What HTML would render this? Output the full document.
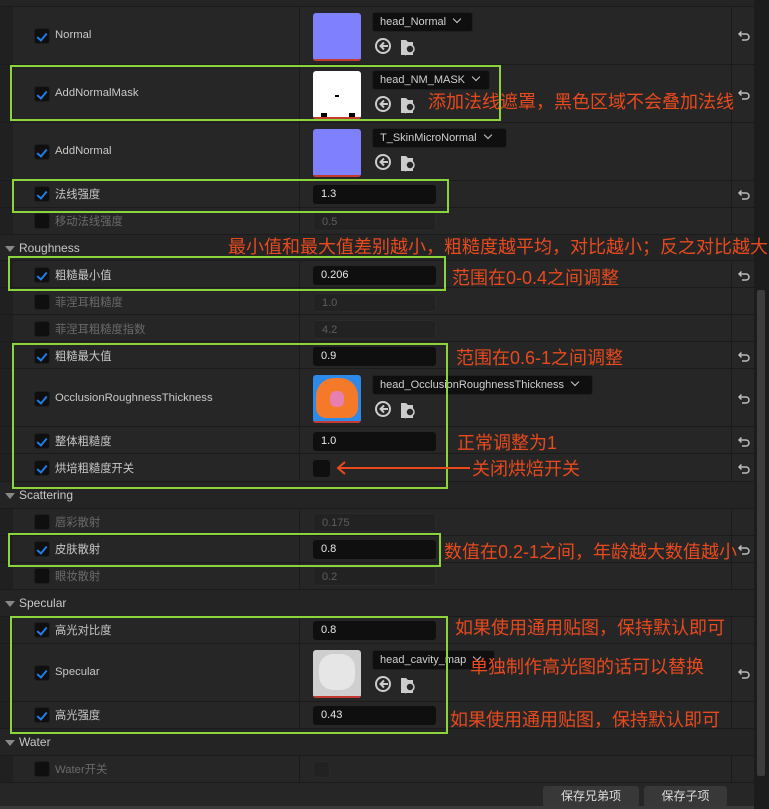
<!DOCTYPE html><html><head><meta charset="utf-8"><style>
*{margin:0;padding:0;box-sizing:border-box}
body{width:769px;height:809px;background:#262626;position:relative;overflow:hidden;font-family:"Liberation Sans","Noto Sans CJK SC",sans-serif;font-size:11px;color:#c8c8c8}
.a{position:absolute}
.row{position:absolute;left:0;width:754px;background:#262626;border-bottom:1px solid #1b1b1b}
.row:before{content:"";position:absolute;left:0;top:0;bottom:0;width:13px;background:#202020}
.div{position:absolute;left:299px;top:0;bottom:0;width:1px;background:#1b1b1b}
.div2{position:absolute;left:731px;top:0;bottom:0;width:1px;background:#1b1b1b}
.cb{position:absolute;left:34px;width:16px;height:16px;background:#0f0f0f;border:1px solid #1e1e1e;border-radius:3px}
.cb.on:after{content:"";position:absolute;left:4px;top:2px;width:4px;height:8px;border:solid #1f7ee8;border-width:0 2px 2px 0;transform:rotate(40deg)}
.lb{position:absolute;left:55px;color:#c8c8c8;font-size:11.3px}
.dis{color:#6a6a6a}
.in{position:absolute;left:313px;width:123px;height:19px;background:#0f0f0f;border-radius:3px;color:#e8e8e8;padding-left:8px;line-height:19px}
.in.d{background:#222;color:#5e5e5e;border:1px solid #2a2a2a}
.hd{position:absolute;left:0;width:754px;background:#242424;border-bottom:1px solid #1b1b1b;color:#c8c8c8;font-size:12px}
.hd:before{content:"";position:absolute;left:5px;top:11px;border:5px solid transparent;border-top:6px solid #888;border-bottom:0}
.th{position:absolute;left:313px;width:48px;height:48px;border-radius:3px;overflow:hidden}
.th:after{content:"";position:absolute;left:0;right:0;bottom:0;height:2px;background:#c43a32}
.dd{position:absolute;left:372px;height:20px;background:#0f0f0f;border-radius:3px;border:1px solid #1f1f1f;color:#d0d0d0;padding-left:7px;line-height:18px}
.dd:after{content:"";display:inline-block;width:5px;height:5px;border:solid #ccc;border-width:0 1.5px 1.5px 0;transform:rotate(45deg);margin-left:8px;position:relative;top:-3px}
.g{position:absolute;border:2px solid #8bd43c}
.r{position:absolute;color:#e84a1e;font-size:18px;white-space:nowrap;font-family:"Liberation Sans","Noto Sans CJK SC",sans-serif}
.btn{position:absolute;top:786px;height:21px;background:#383838;border-radius:3px;color:#ddd;font-size:12px;text-align:center;line-height:21px}
</style></head><body>
<div class="a" style="left:0;top:0;width:769px;height:7px;background:#242424;border-bottom:1px solid #1b1b1b"></div>

<div class="row" style="top:7px;height:58px"><div class="div"></div><div class="div2"></div></div>
<div class="row" style="top:65px;height:58px"><div class="div"></div><div class="div2"></div></div>
<div class="row" style="top:123px;height:58px"><div class="div"></div><div class="div2"></div></div>
<div class="row" style="top:181px;height:27px"><div class="div"></div><div class="div2"></div></div>
<div class="row" style="top:208px;height:27px"><div class="div"></div><div class="div2"></div></div>
<div class="hd" style="top:235px;height:26px"><span class="a" style="left:19px;top:6px">Roughness</span></div>
<div class="row" style="top:261px;height:27px"><div class="div"></div><div class="div2"></div></div>
<div class="row" style="top:288px;height:27px"><div class="div"></div><div class="div2"></div></div>
<div class="row" style="top:315px;height:27px"><div class="div"></div><div class="div2"></div></div>
<div class="row" style="top:342px;height:27px"><div class="div"></div><div class="div2"></div></div>
<div class="row" style="top:369px;height:58px"><div class="div"></div><div class="div2"></div></div>
<div class="row" style="top:427px;height:27px"><div class="div"></div><div class="div2"></div></div>
<div class="row" style="top:454px;height:28px"><div class="div"></div><div class="div2"></div></div>
<div class="hd" style="top:482px;height:27px"><span class="a" style="left:19px;top:6px">Scattering</span></div>
<div class="row" style="top:509px;height:27px"><div class="div"></div><div class="div2"></div></div>
<div class="row" style="top:536px;height:27px"><div class="div"></div><div class="div2"></div></div>
<div class="row" style="top:563px;height:27px"><div class="div"></div><div class="div2"></div></div>
<div class="hd" style="top:590px;height:27px"><span class="a" style="left:19px;top:6px">Specular</span></div>
<div class="row" style="top:617px;height:27px"><div class="div"></div><div class="div2"></div></div>
<div class="row" style="top:644px;height:58px"><div class="div"></div><div class="div2"></div></div>
<div class="row" style="top:702px;height:27px"><div class="div"></div><div class="div2"></div></div>
<div class="hd" style="top:729px;height:27px"><span class="a" style="left:19px;top:6px">Water</span></div>
<div class="row" style="top:756px;height:27px"><div class="div"></div><div class="div2"></div></div>
<div class="a" style="left:0;top:783px;width:754px;height:26px;background:#262626"></div>
<div class="a" style="left:0;top:806px;width:754px;height:3px;background:#3a3a3a"></div>
<div class="a" style="left:754px;top:0;width:15px;height:809px;background:#1c1c1c"></div>
<div class="a" style="left:757px;top:290px;width:8px;height:486px;background:#3d3d3d;border-radius:2px"></div>

<div class="cb on" style="top:28px"></div><div class="lb" style="top:29px">Normal</div>
<div class="cb on" style="top:86px"></div><div class="lb" style="top:87px">AddNormalMask</div>
<div class="cb on" style="top:144px"></div><div class="lb" style="top:145px">AddNormal</div>
<div class="cb on" style="top:186px"></div><div class="lb" style="top:186px">法线强度</div>
<div class="cb" style="top:213px"></div><div class="lb dis" style="top:213px">移动法线强度</div>
<div class="cb on" style="top:267px"></div><div class="lb" style="top:267px">粗糙最小值</div>
<div class="cb" style="top:294px"></div><div class="lb dis" style="top:294px">菲涅耳粗糙度</div>
<div class="cb" style="top:321px"></div><div class="lb dis" style="top:321px">菲涅耳粗糙度指数</div>
<div class="cb on" style="top:348px"></div><div class="lb" style="top:348px">粗糙最大值</div>
<div class="cb on" style="top:391px"></div><div class="lb" style="top:392px">OcclusionRoughnessThickness</div>
<div class="cb on" style="top:433px"></div><div class="lb" style="top:433px">整体粗糙度</div>
<div class="cb on" style="top:460px"></div><div class="lb" style="top:460px">烘培粗糙度开关</div>
<div class="cb" style="top:514px"></div><div class="lb dis" style="top:514px">唇彩散射</div>
<div class="cb on" style="top:541px"></div><div class="lb" style="top:541px">皮肤散射</div>
<div class="cb" style="top:568px"></div><div class="lb dis" style="top:568px">眼妆散射</div>
<div class="cb on" style="top:622px"></div><div class="lb" style="top:622px">高光对比度</div>
<div class="cb on" style="top:665px"></div><div class="lb" style="top:666px">Specular</div>
<div class="cb on" style="top:707px"></div><div class="lb" style="top:707px">高光强度</div>
<div class="cb" style="top:761px"></div><div class="lb dis" style="top:761px">Water开关</div>

<div class="in" style="top:185px">1.3</div>
<div class="in d" style="top:212px">0.5</div>
<div class="in" style="top:266px">0.206</div>
<div class="in d" style="top:293px">1.0</div>
<div class="in d" style="top:320px">4.2</div>
<div class="in" style="top:347px">0.9</div>
<div class="in" style="top:432px">1.0</div>
<div class="a" style="left:313px;top:460px;width:17px;height:17px;background:#0f0f0f;border-radius:3px"></div>
<div class="in d" style="top:513px">0.175</div>
<div class="in" style="top:540px">0.8</div>
<div class="in d" style="top:567px">0.2</div>
<div class="in" style="top:621px">0.8</div>
<div class="in" style="top:706px">0.43</div>
<div class="a" style="left:313px;top:761px;width:17px;height:17px;background:#222;border:1px solid #2a2a2a;border-radius:3px"></div>

<div class="th" style="top:13px;background:#7f80fe"></div>
<div class="th" style="top:71px;background:#fff"><div class="a" style="left:8px;top:42px;width:6px;height:5px;background:#000"></div><div class="a" style="left:36px;top:42px;width:6px;height:5px;background:#000"></div><div class="a" style="left:22px;top:24px;width:4px;height:2px;background:#000"></div></div>
<div class="th" style="top:129px;background:#7f80fe"></div>
<div class="th" style="top:375px;background:#2d8ae8"><div class="a" style="left:3px;top:3px;width:42px;height:40px;background:#f47a2a;border-radius:18px 18px 10px 10px"></div><div class="a" style="left:17px;top:16px;width:14px;height:16px;background:#e77fb0;border-radius:6px"></div></div>
<div class="th" style="top:650px;background:#cfcfcf"><div class="a" style="left:6px;top:4px;width:36px;height:36px;background:#e6e6e6;border-radius:14px"></div></div>

<div class="dd" style="top:12px;width:101px">head_Normal</div>
<div class="dd" style="top:70px;width:118px">head_NM_MASK</div>
<div class="dd" style="top:128px;width:135px">T_SkinMicroNormal</div>
<div class="dd" style="top:375px;width:221px">head_OcclusionRoughnessThickness</div>
<div class="dd" style="top:650px;width:123px">head_cavity_map</div>

<svg class="a" width="0" height="0"><defs>
<g id="ic"><circle cx="8" cy="9" r="7" fill="none" stroke="#ccc" stroke-width="2"/><path d="M13 9H6M9 5.5L5.5 9l3.5 3.5" fill="none" stroke="#ccc" stroke-width="2"/><path d="M26 3h5l2 2h5v13H26z" fill="#ccc"/><circle cx="35" cy="12" r="4" fill="#262626" stroke="#ccc" stroke-width="1.5"/><path d="M32.5 15L30 18" stroke="#ccc" stroke-width="1.8"/></g></defs></svg>
<svg class="a" style="left:375px;top:37px" width="45" height="21"><use href="#ic"/></svg>
<svg class="a" style="left:375px;top:95px" width="45" height="21"><use href="#ic"/></svg>
<svg class="a" style="left:375px;top:153px" width="45" height="21"><use href="#ic"/></svg>
<svg class="a" style="left:375px;top:400px" width="45" height="21"><use href="#ic"/></svg>
<svg class="a" style="left:375px;top:675px" width="45" height="21"><use href="#ic"/></svg>

<svg class="a" width="0" height="0"><defs><path id="rs" d="M3 4h7a3 3 0 0 1 0 6H6M5.5 1.5L3 4l2.5 2.5" fill="none" stroke="#bbb" stroke-width="1.5"/></defs></svg>
<svg class="a" style="left:736px;top:30px" width="14" height="12"><use href="#rs"/></svg>
<svg class="a" style="left:736px;top:89px" width="14" height="12"><use href="#rs"/></svg>
<svg class="a" style="left:736px;top:189px" width="14" height="12"><use href="#rs"/></svg>
<svg class="a" style="left:736px;top:270px" width="14" height="12"><use href="#rs"/></svg>
<svg class="a" style="left:736px;top:351px" width="14" height="12"><use href="#rs"/></svg>
<svg class="a" style="left:736px;top:393px" width="14" height="12"><use href="#rs"/></svg>
<svg class="a" style="left:736px;top:436px" width="14" height="12"><use href="#rs"/></svg>
<svg class="a" style="left:736px;top:463px" width="14" height="12"><use href="#rs"/></svg>
<svg class="a" style="left:736px;top:544px" width="14" height="12"><use href="#rs"/></svg>
<svg class="a" style="left:736px;top:668px" width="14" height="12"><use href="#rs"/></svg>

<div class="g" style="left:10px;top:65px;width:491px;height:56px"></div>
<div class="g" style="left:12px;top:179px;width:437px;height:34px"></div>
<div class="g" style="left:8px;top:256px;width:438px;height:35px"></div>
<div class="g" style="left:12px;top:343px;width:436px;height:146px"></div>
<div class="g" style="left:8px;top:533px;width:433px;height:34px"></div>
<div class="g" style="left:10px;top:616px;width:438px;height:118px"></div>

<div class="r" style="left:428px;top:88px">添加法线遮罩，黑色区域不会叠加法线</div>
<div class="r" style="left:228px;top:233px">最小值和最大值差别越小，粗糙度越平均，对比越小；反之对比越大</div>
<div class="r" style="left:452px;top:264px">范围在0-0.4之间调整</div>
<div class="r" style="left:456px;top:344px">范围在0.6-1之间调整</div>
<div class="r" style="left:457px;top:429px">正常调整为1</div>
<svg class="a" style="left:334px;top:460px" width="140" height="16"><path d="M4 8H136" stroke="#e84a1e" stroke-width="2"/><path d="M11 2L4 8l7 6" fill="none" stroke="#e84a1e" stroke-width="2"/></svg>
<div class="r" style="left:472px;top:455px">关闭烘焙开关</div>
<div class="r" style="left:444px;top:538px">数值在0.2-1之间，年龄越大数值越小</div>
<div class="r" style="left:455px;top:614px">如果使用通用贴图，保持默认即可</div>
<div class="r" style="left:470px;top:653px">单独制作高光图的话可以替换</div>
<div class="r" style="left:450px;top:706px">如果使用通用贴图，保持默认即可</div>

<div class="btn" style="left:543px;width:96px">保存兄弟项</div>
<div class="btn" style="left:644px;width:83px">保存子项</div>
</body></html>
